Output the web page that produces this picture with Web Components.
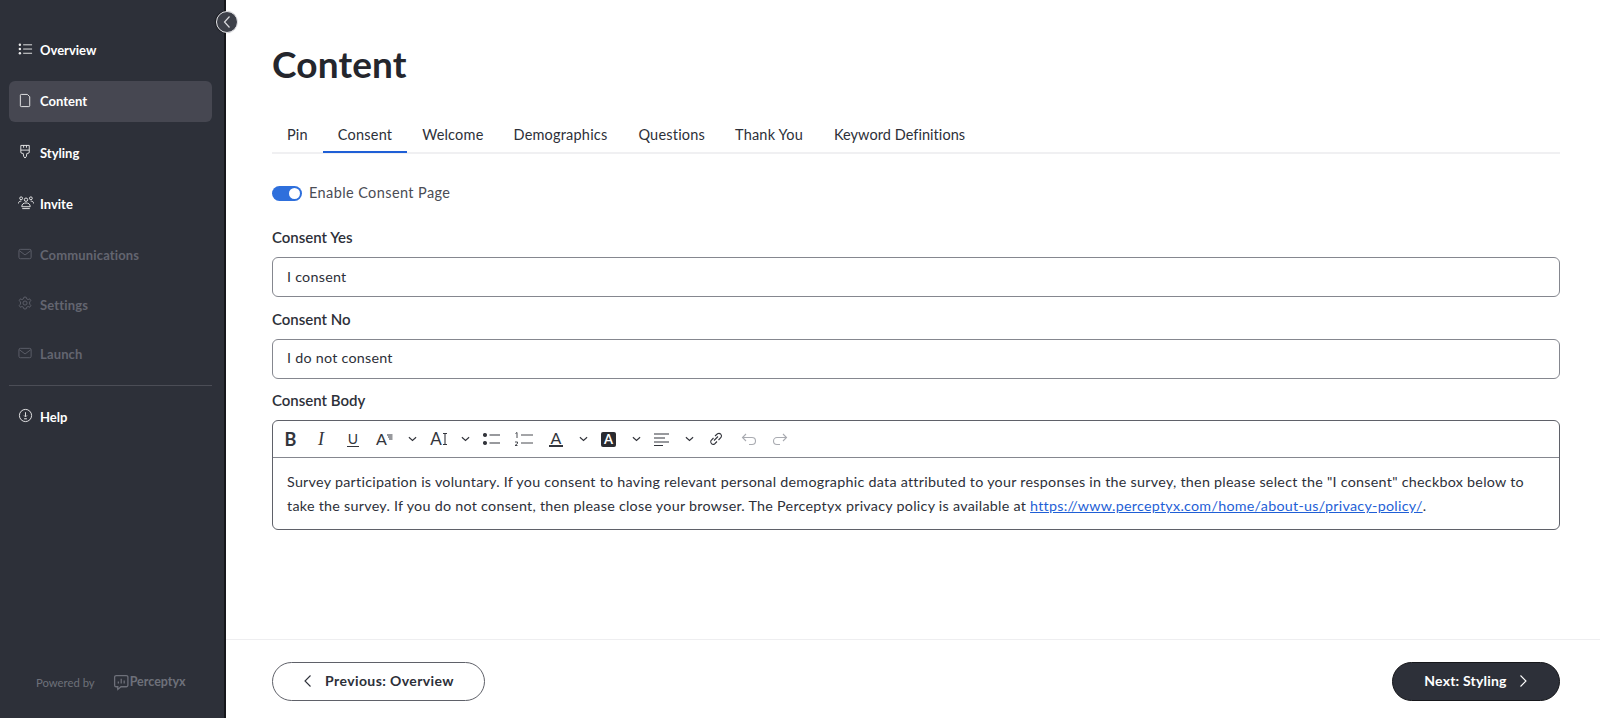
<!DOCTYPE html>
<html lang="en"><head><meta charset="utf-8"><title>Content</title>
<style>
html,body{margin:0;height:100%;overflow:hidden;background:#fff}
body{font-family:"Lato","Liberation Sans",sans-serif;color:#2d3039}
app-shell{height:718px}
</style></head><body>
<app-shell>
  <side-nav slot="nav"></side-nav>
  <page-title>Content</page-title>
  <tab-bar></tab-bar>
  <toggle-row>Enable Consent Page</toggle-row>
  <text-field label="Consent Yes" value="I consent"></text-field>
  <text-field label="Consent No" value="I do not consent"></text-field>
  <rich-editor label="Consent Body">Survey participation is voluntary. If you consent to having relevant personal demographic data attributed to your responses in the survey, then please select the "I consent" checkbox below to take the survey. If you do not consent, then please close your browser. The Perceptyx privacy policy is available at <a href="#" style="color:#1f5fd6;text-decoration:underline">https://www.perceptyx.com/home/about-us/privacy-policy/</a>.</rich-editor>
  <footer-bar slot="footer"></footer-bar>
</app-shell>
<script>
const I={
overview:'<circle cx="2" cy="3" r="1.3" fill="currentColor" stroke="none"/><circle cx="2" cy="7.5" r="1.3" fill="currentColor" stroke="none"/><circle cx="2" cy="12" r="1.3" fill="currentColor" stroke="none"/><path d="M5.5 3H15M5.5 7.500H15M5.500 12H15"/>',
content:'<path d="M3.500 1.500H10L12.500 4V13.500A1 1 0 0 1 11.500 14.500H3.500A1 1 0 0 1 2.500 13.500V2.500A1 1 0 0 1 3.500 1.500Z"/>',
styling:'<path d="M3 1.500H12V8.500A1.500 1.500 0 0 1 10.500 10H9.500L8.800 13.500L7.500 15L6.200 13.500L5.500 10H4.500A1.500 1.500 0 0 1 3 8.500Z"/><path d="M3 6.500H12M6 1.500V4M9 1.500V4" />',
invite:'<circle cx="9" cy="5" r="1.800"/><circle cx="3.800" cy="3.500" r="1.500"/><circle cx="14.200" cy="3.500" r="1.500"/><path d="M4.500 12.500C4.500 9.500 6.500 8.500 9 8.500S13.500 9.500 13.500 12.500ZM1 9C1 7 2.300 6.500 4 6.500M17 9C17 7 15.700 6.500 14 6.500M5 14.500H13"/>',
mail:'<rect x="1" y="2.500" width="13" height="10" rx="1.500"/><path d="M1.500 4L7.500 8.500L13.500 4"/>',
gear:'<circle cx="7.500" cy="7.500" r="2.200"/><path d="M6.300 1.200H8.700L9.200 3L10.800 3.800L12.500 3L13.700 5L12.400 6.300V8.700L13.700 10L12.500 12L10.800 11.200L9.200 12L8.700 13.800H6.300L5.800 12L4.200 11.200L2.500 12L1.300 10L2.600 8.700V6.300L1.300 5L2.500 3L4.200 3.800L5.800 3Z"/>',
help:'<circle cx="8" cy="8" r="6.500"/><path d="M8 4.500V9M6.500 8L8 9.500L9.500 8M6.500 11.500H9.500"/>'
};
function def(name,html){customElements.define(name,class extends HTMLElement{
 constructor(){super();this.attachShadow({mode:'open'}).innerHTML=typeof html==='function'?html(this):html;}
});}
def('app-shell',`<style>
:host{display:grid;grid-template-columns:226px 1fr;grid-template-rows:1fr 79px;width:1600px}
.nav{grid-row:1/3;display:flex;min-height:0}
main{padding:42px 40px 0 46px;display:flex;flex-direction:column;min-width:0}
.foot{display:block;border-top:1px solid #eeeef0}
</style><div class="nav"><slot name="nav"></slot></div><main><slot></slot></main><div class="foot"><slot name="footer"></slot></div>`);

def('nav-item',h=>{const ic=h.getAttribute('icon'),inv=ic==='invite';
 return `<style>
:host{display:block;height:41px;margin:0 12px 10.300px 9px;border-radius:6px;color:#fff}
:host([active]){background:#464751}
:host([off]){color:#636570;margin-bottom:8.500px;letter-spacing:.15px}
.r{display:flex;align-items:center;height:100%;padding-left:9px;font:700 13px/1 "Lato",sans-serif;gap:${inv?'5px':'7px'}}
svg{width:${inv?'18':'15'}px;height:15px;fill:none;stroke:currentColor;stroke-width:1;flex:none;margin-top:-3px;margin-left:${inv?'-1px':'0'};opacity:.9}
</style><div class="r"><svg viewBox="${inv?'0 0 18 16':'0 0 16 16'}">${I[ic]}</svg><span><slot></slot></span></div>`});

def('side-nav',`<style>
:host{display:flex;flex-direction:column;width:226px;box-sizing:border-box;background:#2d3039;border-right:2px solid #16171b;position:relative;padding-top:30px;height:718px}
hr{margin:1px 0 11px 9px;border:0;border-top:1px solid #4b4d56;width:203px}
.tog{position:absolute;left:216px;top:11px;width:22px;height:22px;border-radius:50%;background:#3d4049;border:1px solid #e6e6ea;box-sizing:border-box;display:flex;align-items:center;justify-content:center;box-shadow:-1px 0 1px rgba(0,0,0,.4)}
.tog svg{width:10px;height:14px;fill:none;stroke:#dcdce0;stroke-width:1.200}
.pw{margin-top:auto;height:71px;padding-left:36px;display:flex;align-items:center;color:#6e707a;font:400 11.300px/1 "Lato",sans-serif;gap:18px;box-sizing:border-box}
.lg{display:flex;align-items:center;gap:1px;font:700 12.500px/1 "Lato",sans-serif}
.lg svg{width:16px;height:17px;fill:none;stroke:currentColor;stroke-width:1.200}
</style>
<nav-item icon="overview">Overview</nav-item>
<nav-item icon="content" active>Content</nav-item>
<nav-item icon="styling">Styling</nav-item>
<nav-item icon="invite">Invite</nav-item>
<nav-item icon="mail" off>Communications</nav-item>
<nav-item icon="gear" off>Settings</nav-item>
<nav-item icon="mail" off>Launch</nav-item>
<hr><nav-item icon="help">Help</nav-item>
<div class="tog"><svg viewBox="0 0 10 14"><path d="M7.500 1.500L2.500 7L7.500 12.500"/></svg></div>
<div class="pw"><span>Powered by</span><span class="lg"><svg viewBox="0 0 15 16"><path d="M3 1.500H12.500A1.500 1.500 0 0 1 14 3V10.500A1.500 1.500 0 0 1 12.500 12H7.500L4.500 14.500V12H3A1.500 1.500 0 0 1 1.500 10.500V3A1.500 1.500 0 0 1 3 1.500ZM5 9V7M7.700 9V4.500M10.500 9V6"/></svg>Perceptyx</span></div>`);

def('page-title',`<style>:host{display:block;font:700 37px/43px "Lato",sans-serif;color:#24262d;margin-bottom:35px;letter-spacing:.15px}</style><slot></slot>`);

def('tab-bar',`<style>
:host{display:flex;border-bottom:2px solid #f0f0f2;height:32px;font:400 14.500px/1 "Lato",sans-serif;color:#2d3039;letter-spacing:.2px;margin-bottom:31px}
span{padding:8px 15px 0;height:33px;box-sizing:border-box;display:block}
.a{border-bottom:2px solid #1f5fd6}
.m{margin-left:1px}
.k{margin-left:1px;letter-spacing:.05px}
</style><span>Pin</span><span class="a">Consent</span><span>Welcome</span><span>Demographics</span><span class="m">Questions</span><span>Thank You</span><span class="k">Keyword Definitions</span>`);

def('toggle-row',`<style>
:host{display:flex;align-items:center;gap:7px;font:400 14.500px/16px "Lato",sans-serif;color:#4a4c55;letter-spacing:.4px;margin-bottom:28px}
i{display:block;width:30px;height:15px;border-radius:8px;background:#2e6fdc;position:relative}
i:after{content:"";position:absolute;right:2px;top:2px;width:11px;height:11px;border-radius:50%;background:#fff}
</style><i></i><span><slot></slot></span>`);

def('text-field',h=>`<style>
:host{display:block;margin-bottom:13.500px}
label{display:block;font:600 15px/17px "Lato",sans-serif;color:#2d3039;margin-bottom:11px}
div{box-sizing:border-box;height:40px;border:1px solid #85878f;border-radius:6px;padding:0 14px;display:flex;align-items:center;font:400 14.300px/1 "Lato",sans-serif;letter-spacing:.25px;color:#2d3039}
</style><label>${h.getAttribute('label')}</label><div>${h.getAttribute('value')}</div>`);

const chev=m=>`<span class="it" style="width:9px;margin-left:${m}px"><svg viewBox="0 0 10 6" style="width:9px;height:6px"><path d="M1 1L5 4.500L9 1" stroke-width="1.300"/></svg></span>`;
const ic=(w,m,p,x='')=>`<span class="it" style="width:${w}px;margin-left:${m}px;${x}"><svg viewBox="0 0 ${w} 16" style="width:${w}px">${p}</svg></span>`;
const tx=(w,m,t,x)=>`<span class="it" style="width:${w}px;margin-left:${m}px;${x}">${t}</span>`;
def('rich-editor',h=>`<style>
:host{display:block}
label{display:block;font:600 15px/17px "Lato",sans-serif;color:#2d3039;margin-bottom:11px}
.box{border:1px solid #5f6169;border-radius:6px;overflow:hidden}
.tb{height:36px;border-bottom:1px solid #85878f;display:flex;align-items:center;color:#33353c}
svg{height:16px;fill:none;stroke:currentColor;stroke-width:1.100;flex:none}
.it{display:flex;align-items:center;justify-content:center;flex:none;height:16px;box-sizing:content-box}
.body{padding:12px 14px 0;height:71px;box-sizing:border-box;font:400 14.300px/24px "Lato",sans-serif;letter-spacing:.27px;color:#2d3039}
</style><label>${h.getAttribute('label')}</label><div class="box"><div class="tb">
${tx(13,11,'B',"font:700 18px/16px Lato,sans-serif")}
${tx(8,20,'I',"font:italic 400 18px/16px 'Liberation Serif',serif")}
${tx(12,22,'U',"font:400 14px/14px Lato,sans-serif;border-bottom:1px solid #33353c;height:14px")}
${tx(11,17,'A',"font:400 16px/16px Lato,sans-serif")}
${ic(6,0,'<path d="M0 4H5.500M1 6H5.500M2 8H5.500"/>')}
${chev(15)}
${tx(12,13,'A',"font:400 17px/16px Lato,sans-serif")}
${ic(6,0,'<path d="M1 2.500H5M1 13.500H5M3 2.500V13.500"/>')}
${chev(13)}
${ic(17,13,'<circle cx="2" cy="4" r="1.500" fill="currentColor"/><circle cx="2" cy="12" r="1.500" fill="currentColor"/><path d="M6.500 4H17M6.500 12H17"/>')}
${ic(19,14,'<path d="M1.500 2.500L3 1.500V7M1 11H3.500V12.500L1 14.500H3.500M7 4H19M7 12H19" stroke-width=".9"/>')}
${tx(14,16,'A',"font:400 16px/14px Lato,sans-serif;border-bottom:2px solid #33353c;height:14px")}
${chev(16)}
${tx(15,13,'A',"font:700 13px/15px Lato,sans-serif;color:#fff;background:#2a2b30;border-radius:2px;height:15px")}
${chev(16)}
${ic(15,13,'<path d="M0 3H15M0 7H11M0 11H15M0 14.500H9" stroke-width="1.200"/>')}
${chev(16)}
${ic(15,14,'<path d="M6 9.500L10 5.500M5.500 7L3 9.500A2.600 2.600 0 0 0 6.600 13L9 10.500M7 5L9.500 2.800A2.600 2.600 0 0 1 13 6.500L10.500 9"/>')}
${ic(15,18,'<path d="M5 3L1.500 6.500L5 10M1.500 6.500H11A3.500 3.500 0 0 1 11 13.500H8"/>','color:#a9abb1')}
${ic(16,16,'<path d="M11 3L14.500 6.500L11 10M14.500 6.500H5A3.500 3.500 0 0 0 5 13.500H8"/>','color:#a9abb1')}
</div><div class="body"><slot></slot></div></div>`);

def('footer-bar',`<style>
:host{display:flex;justify-content:space-between;align-items:center;height:78px;padding:4px 40px 0 46px;box-sizing:border-box}
a{display:flex;align-items:center;justify-content:center;height:39px;border-radius:20px;box-sizing:border-box;font:700 14px/1 "Lato",sans-serif;letter-spacing:.2px}
.p{width:213px;border:1px solid #5f6169;color:#2d3039;gap:13px;letter-spacing:.4px}
.n{width:168px;background:#2d3039;border:1px solid #16171b;color:#fff;gap:12px}
svg{width:9px;height:14px;fill:none;stroke:currentColor;stroke-width:1.100}
</style><a class="p"><svg viewBox="0 0 9 14"><path d="M7.500 1.500L2 7L7.500 12.500"/></svg>Previous: Overview</a><a class="n">Next: Styling<svg viewBox="0 0 9 14"><path d="M1.500 1.500L7 7L1.500 12.500"/></svg></a>`);
</script>
</body></html>
